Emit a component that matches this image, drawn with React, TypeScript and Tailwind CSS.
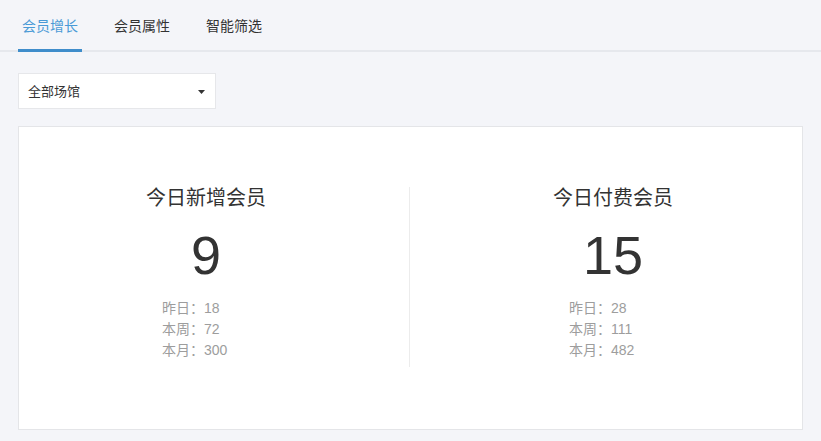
import React from "react";

const font = { fontFamily: '"Liberation Sans", "Noto Sans CJK SC", sans-serif' };

const tabs = ["会员增长", "会员属性", "智能筛选"];

type Stat = { title: string; value: string; rows: [string, string][] };

const stats: Stat[] = [
  {
    title: "今日新增会员",
    value: "9",
    rows: [
      ["昨日", "18"],
      ["本周", "72"],
      ["本月", "300"],
    ],
  },
  {
    title: "今日付费会员",
    value: "15",
    rows: [
      ["昨日", "28"],
      ["本周", "111"],
      ["本月", "482"],
    ],
  },
];

function StatBlock({ s }: { s: Stat }) {
  return (
    <div className="flex flex-col items-center">
      <div className="text-[20px] leading-[28px] text-[#333]">{s.title}</div>
      <div className="mt-[13px] text-[54px] leading-[60px] text-[#333]">{s.value}</div>
      <div className="mt-[13px] w-[88px] text-[14px] leading-[21px] text-[#9d9d9d]">
        {s.rows.map(([k, v]) => (
          <div key={k}>
            {k}：{v}
          </div>
        ))}
      </div>
    </div>
  );
}

export default function App() {
  return (
    <div className="min-h-screen w-full bg-[#f4f5f9]" style={font}>
      <div className="flex h-[52px] gap-[28px] border-b-2 border-[#e6e8ed] pl-[18px]">
        {tabs.map((t, i) => (
          <div
            key={t}
            className={
              "relative flex h-[50px] items-center px-[4px] pt-[2px] text-[14px] " +
              (i === 0 ? "text-[#4a9ad6]" : "text-[#333]")
            }
          >
            {t}
            {i === 0 && (
              <span className="absolute bottom-[-2px] left-0 h-[3px] w-full bg-[#3f8dcb]" />
            )}
          </div>
        ))}
      </div>

      <div className="px-[18px]">
        <div className="mt-[21px] flex h-[36px] w-[198px] items-center justify-between border border-[#e6e7ea] bg-white pl-[9px] pr-[10px] pt-[1px] text-[13px] text-[#333]">
          <span>全部场馆</span>
          <svg width="7" height="4" viewBox="0 0 7 4">
            <path d="M0 0 L7 0 L3.5 4 Z" fill="#333" />
          </svg>
        </div>

        <div className="mt-[17px] h-[304px] w-[785px] border border-[#e4e5e8] bg-white pt-[57px]">
          <div className="flex items-start">
            <div className="w-[390px] pr-[16px]">
              <StatBlock s={stats[0]} />
            </div>
            <div className="mt-[3px] h-[180px] w-px bg-[#ececec]" />
            <div className="flex-1 pl-[14px]">
              <StatBlock s={stats[1]} />
            </div>
          </div>
        </div>
      </div>
    </div>
  );
}
